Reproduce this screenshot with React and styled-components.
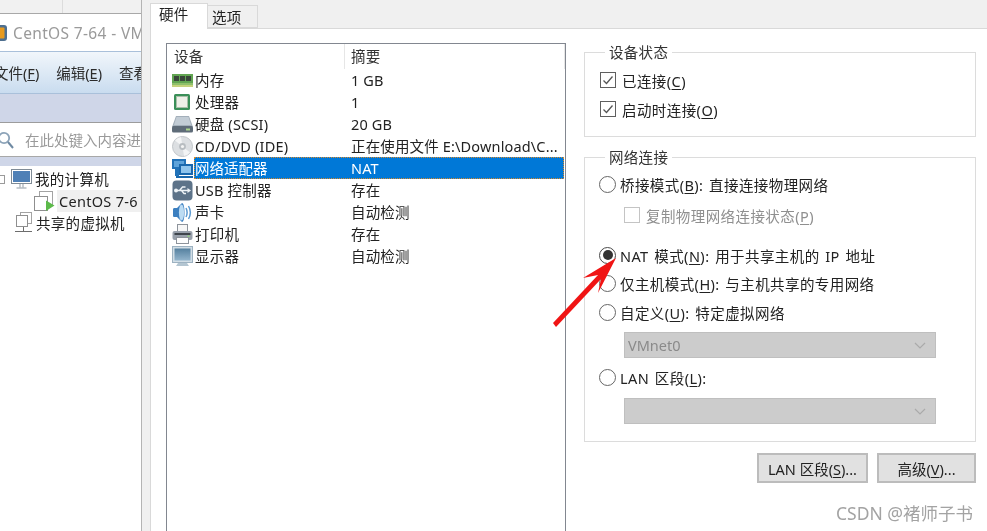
import React from 'react';
import styled, { createGlobalStyle } from 'styled-components';

const GlobalStyle = createGlobalStyle`
  html, body {
    margin: 0;
    padding: 0;
    background: #f0f0f0;
    overflow: hidden;
  }
  * { box-sizing: border-box; }
  svg { flex: none; }
`;

const Page = styled.div`
  position: relative;
  display: flex;
  width: 987px;
  height: 531px;
  overflow: hidden;
  font-family: "Noto Sans", "Noto Sans CJK SC", sans-serif;
  font-size: 14.5px;
  color: #222;
  filter: blur(0.35px);
`;

/* background window on the left */
const BackWindow = styled.div`
  width: 142px;
  flex: none;
  overflow: hidden;
  background: #fff;
  border-right: 1px solid #b4b4b4;
  white-space: nowrap;
`;

const TopStrip = styled.div`
  height: 14px;
  background: #f1f1f1;
  border-bottom: 1px solid #a8a8a8;
  display: flex;
  > div {
    width: 63px;
    border-right: 1px solid #dcdcdc;
  }
`;

const TitleBar = styled.div`
  height: 37px;
  display: flex;
  align-items: center;
  gap: 5px;
  margin-left: -10px;
  font-size: 15.5px;
  color: #9a9a9a;
  letter-spacing: 0.35px;
`;

const MenuBar = styled.div`
  height: 43px;
  display: flex;
  align-items: center;
  gap: 17px;
  color: #2b2b2b;
  background: linear-gradient(#f1f6fb, #c9dcef);
  border-top: 1px solid #a9c0da;
  border-bottom: 1px solid #a9c0da;
  > span:first-child { margin-left: -6px; }
`;

const ToolStrip = styled.div`
  height: 29px;
  background: #cfd6e8;
  border-bottom: 1px solid #9c9c9c;
`;

const SearchBar = styled.div`
  height: 34px;
  display: flex;
  align-items: center;
  gap: 11px;
  color: #9a9a9a;
  border-bottom: 1px solid #a8a8a8;
  svg { margin-left: -3px; }
`;

const SideStrip = styled.div`
  height: 9px;
  background: #cfd6e8;
`;

const Tree = styled.div`
  padding-top: 2px;
`;

const TreeRow = styled.div`
  height: 22px;
  display: flex;
  align-items: center;
  padding-left: ${p => p.$indent}px;
  gap: ${p => p.$gap}px;
`;

const TreeLabel = styled.span`
  padding: 0 2px;
  line-height: 22px;
  letter-spacing: 0.3px;
  background: ${p => (p.$active ? '#f0f0f0' : 'transparent')};
  flex: ${p => (p.$active ? '1' : 'none')};
`;

const Expander = styled.span`
  width: 6px;
  height: 9px;
  margin-left: -1px;
  margin-right: 5px;
  border: 1px solid #9a9a9a;
  border-left: none;
  flex: none;
`;

/* settings dialog */
const Dialog = styled.div`
  flex: 1;
  padding: 3px 0 0 8px;
  background: #f0f0f0;
  display: flex;
  flex-direction: column;
`;

const Tabs = styled.div`
  display: flex;
  align-items: flex-end;
  height: 25px;
  flex: none;
`;

const Tab = styled.div`
  height: ${p => (p.$active ? 26 : 23)}px;
  width: ${p => (p.$active ? 58 : 50)}px;
  margin-bottom: ${p => (p.$active ? -1 : 0)}px;
  padding-left: ${p => (p.$active ? 8 : 4)}px;
  line-height: ${p => (p.$active ? 21 : 22)}px;
  background: ${p => (p.$active ? '#fff' : '#f0f0f0')};
  border: 1px solid #d9d9d9;
  border-bottom: ${p => (p.$active ? 'none' : '1px solid #d9d9d9')};
  border-left: ${p => (p.$active ? '1px solid #d9d9d9' : 'none')};
  position: relative;
  letter-spacing: 0.3px;
`;

const TabPanel = styled.div`
  flex: 1;
  min-height: 0;
  display: flex;
  gap: 18px;
  padding: 14px 0 0 15px;
  background: #fff;
  border-top: 1px solid #d9d9d9;
  border-left: 1px solid #d9d9d9;
`;

const DeviceList = styled.div`
  width: 400px;
  height: 500px;
  flex: none;
  border: 1px solid #828790;
  border-bottom: none;
`;

const ListHeader = styled.div`
  display: flex;
  height: 25px;
  line-height: 25px;
  color: #333;
  letter-spacing: 0.3px;
`;

const HeadCell = styled.div`
  width: ${p => p.$w}px;
  padding-left: ${p => p.$pad}px;
  border-right: 1px solid #e6e6e6;
`;

const DeviceRow = styled.div`
  display: flex;
  height: 22px;
  align-items: center;
  padding-left: 4px;
  padding-right: 1px;
`;

const IconSlot = styled.span`
  width: 22px;
  height: 22px;
  flex: none;
  display: flex;
  align-items: center;
  justify-content: center;
`;

const RowBody = styled.div`
  flex: 1;
  display: flex;
  height: 22px;
  line-height: 22px;
  margin-left: 1px;
  color: ${p => (p.$selected ? '#fff' : '#222')};
  background: ${p => (p.$selected ? '#0078d7' : 'transparent')};
  outline: ${p => (p.$selected ? '1px dotted #d98a2b' : 'none')};
  outline-offset: -1px;
  white-space: nowrap;
`;

const DeviceName = styled.span`
  width: 157px;
  padding-left: 1px;
  flex: none;
  letter-spacing: ${p => (p.$selected ? 0 : 0.2)}px;
`;

const Summary = styled.span`
  flex: 1;
  letter-spacing: 0.15px;
`;

const SideColumn = styled.div`
  width: 392px;
  flex: none;
  display: flex;
  flex-direction: column;
`;

const Group = styled.fieldset`
  margin: 0;
  min-width: 0;
  padding: ${p => p.$pad};
  border: 1px solid #dcdcdc;
  & + & { margin-top: 11px; }
`;

const GroupTitle = styled.legend`
  margin-left: 5px;
  padding: 0 4px 0 4px;
  line-height: 19px;
  color: #333;
  letter-spacing: 0.3px;
`;

const Option = styled.div`
  display: flex;
  align-items: center;
  height: 20px;
  gap: 4px;
  margin-top: ${p => p.$top || 0}px;
  margin-left: ${p => p.$left || 0}px;
  color: ${p => (p.$disabled ? '#8f8f8f' : '#222')};
  white-space: nowrap;
  letter-spacing: 0.42px;
  word-spacing: 1.5px;
  u { text-underline-offset: 2px; }
`;

const Check = styled.span`
  width: 16px;
  height: 16px;
  flex: none;
  margin-right: 2px;
  border: 1px solid ${p => (p.$disabled ? '#c4c4c4' : '#5f5f5f')};
  background: #fff;
  display: flex;
  align-items: center;
  justify-content: center;
`;

const Radio = styled.span`
  width: 17px;
  height: 17px;
  flex: none;
  margin-left: -1px;
  border: 1.5px solid ${p => (p.$on ? '#4a4a4a' : '#666')};
  border-radius: 50%;
  background: #fff;
  display: flex;
  align-items: center;
  justify-content: center;
  &::after {
    content: '';
    width: 10px;
    height: 10px;
    border-radius: 50%;
    background: ${p => (p.$on ? '#333' : 'transparent')};
  }
`;

const FakeSelect = styled.div`
  width: 312px;
  height: 26px;
  margin-top: ${p => p.$top}px;
  margin-left: 24px;
  padding: 0 9px 0 3px;
  display: flex;
  align-items: center;
  justify-content: space-between;
  color: #8a8a8a;
  background: #cccccc;
  border: 1px solid #bfbfbf;
`;

const ButtonRow = styled.div`
  display: flex;
  justify-content: flex-end;
  gap: 9px;
  margin-top: 11px;
`;

const DialogButton = styled.button`
  width: ${p => p.$w}px;
  height: 30px;
  padding: 0;
  font: inherit;
  color: #222;
  background: #e1e1e1;
  border: 2px solid #bcbcbc;
  white-space: nowrap;
  u { text-underline-offset: 2px; }
`;

const Watermark = styled.div`
  position: absolute;
  right: 14px;
  bottom: 8px;
  font-size: 17.5px;
  line-height: 20px;
  color: #a3a3a3;
`;

const ArrowMark = styled.svg`
  position: absolute;
  left: 550px;
  top: 255px;
`;

/* little drawings */
const RamIcon = () => (
  <svg width="21" height="13" viewBox="0 0 21 13">
    <rect x="0" y="0" width="21" height="9" fill="#62a552" />
    <rect x="2" y="2" width="5" height="5" fill="#39463a" />
    <rect x="8" y="2" width="5" height="5" fill="#39463a" />
    <rect x="14" y="2" width="5" height="5" fill="#39463a" />
    <rect x="0" y="9" width="21" height="2" fill="#8fc06b" />
    <rect x="0" y="11" width="21" height="2" fill="#c5d27c" />
  </svg>
);

const CpuIcon = () => (
  <svg width="18" height="18" viewBox="0 0 18 18">
    <rect x="1" y="1" width="16" height="16" rx="1.5" fill="#3a8f58" />
    <rect x="3.5" y="3.5" width="11" height="11" fill="#eef0e8" stroke="#a8bfa8" />
  </svg>
);

const DiskIcon = () => (
  <svg width="21" height="17" viewBox="0 0 21 17">
    <path d="M4 0h13l4 11H0z" fill="#a3afba" />
    <path d="M4.5 1h12l2.5 8H2z" fill="#c2ccd5" />
    <rect x="0" y="10" width="21" height="6.5" rx="1.5" fill="#5e6b78" />
    <rect x="14" y="12.5" width="4" height="2" fill="#a9d48a" />
  </svg>
);

const DiscIcon = () => (
  <svg width="21" height="21" viewBox="0 0 21 21">
    <circle cx="10.5" cy="10.5" r="10" fill="#dcdfe2" stroke="#c1c5c9" />
    <path d="M10.5 10.5L3 4.5A10 10 0 0 1 9 1zM10.5 10.5L18 16.5A10 10 0 0 1 12 20z" fill="#f3f4f5" />
    <circle cx="10.5" cy="10.5" r="3.4" fill="#b8bdc1" />
    <circle cx="10.5" cy="10.5" r="1.6" fill="#f4f4f4" />
  </svg>
);

const NetIcon = () => (
  <svg width="21" height="21" viewBox="0 0 21 21">
    <rect x="0" y="1" width="14" height="10" fill="#2272b8" />
    <rect x="2" y="3" width="10" height="6" fill="#5ea3da" />
    <rect x="7" y="6" width="14" height="11" fill="#1a68ad" />
    <rect x="9" y="8" width="10" height="7" fill="#8fc4ec" />
    <rect x="4" y="18" width="17" height="2" fill="#1a68ad" />
    <rect x="3" y="11" width="4" height="7" fill="#2272b8" />
  </svg>
);

const UsbIcon = () => (
  <svg width="21" height="21" viewBox="0 0 21 21">
    <rect x="0.5" y="0.5" width="20" height="20" rx="4" fill="#5d7389" />
    <path d="M3.5 10.5h13M7.5 10.5l3-3.5h3M9.5 10.5l2.5 3h2" stroke="#eef3f7" strokeWidth="1.4" fill="none" />
    <circle cx="4" cy="10.5" r="2" fill="#eef3f7" />
    <path d="M15.5 8l3.5 2.5-3.5 2.5z" fill="#eef3f7" />
  </svg>
);

const SpeakerIcon = () => (
  <svg width="20" height="21" viewBox="0 0 20 21">
    <path d="M1 7.5c0-1 .6-1.5 1.5-1.5H5L10 1c1.5 0 2.5 4 2.5 9.5S11.500 20 10 20L5 15H2.500C1.600 15 1 14.500 1 13.500z" fill="#3c7fc0" />
    <ellipse cx="9.500" cy="10.500" rx="2.600" ry="8" fill="#bcdcf3" />
    <path d="M14 6c1.500 3 1.500 6 0 9M16.500 4c2.300 4 2.300 9 0 13" stroke="#5c9bd2" strokeWidth="1.500" fill="none" />
  </svg>
);

const PrinterIcon = () => (
  <svg width="21" height="21" viewBox="0 0 21 21">
    <rect x="5.500" y="0.500" width="10" height="8" fill="#f7f7f7" stroke="#8d939b" />
    <rect x="0.500" y="7" width="20" height="9" rx="2" fill="#98a0ab" />
    <rect x="2.500" y="9" width="16" height="2" fill="#3f454c" />
    <rect x="15.500" y="11.500" width="2" height="1.500" fill="#8fcf7a" />
    <rect x="4.500" y="13.500" width="12" height="6" fill="#fdfdfd" stroke="#8d939b" />
  </svg>
);

const MonitorIcon = () => (
  <svg width="21" height="21" viewBox="0 0 21 21">
    <defs>
      <linearGradient id="screenFill" x1="0" y1="0" x2="0" y2="1">
        <stop offset="0" stopColor="#55809f" />
        <stop offset="1" stopColor="#93b5cd" />
      </linearGradient>
    </defs>
    <rect x="0.500" y="0.500" width="20" height="16" fill="#d2dee6" stroke="#9db2c1" />
    <rect x="2.500" y="2.500" width="16" height="12" fill="url(#screenFill)" />
    <path d="M6 17h9l2 3H4z" fill="#b3c5d1" />
  </svg>
);

const HostIcon = () => (
  <svg width="21" height="21" viewBox="0 0 21 21">
    <rect x="0.500" y="0.500" width="20" height="14" fill="#fff" stroke="#7f8b96" />
    <rect x="2" y="2" width="17" height="11" fill="#4f80b6" />
    <path d="M9 15v3.500M12 15v3.500M5.500 19h10" stroke="#8f9aa5" fill="none" />
  </svg>
);

const VmIcon = () => (
  <svg width="21" height="22" viewBox="0 0 21 22">
    <rect x="5.500" y="1.500" width="13" height="13" fill="#fff" stroke="#a3a3a3" />
    <rect x="0.500" y="6.500" width="13" height="14" fill="#fff" stroke="#8f8f8f" />
    <path d="M12 10.500l8.500 5-8.500 5.500z" fill="#5cba4a" />
  </svg>
);

const SharedIcon = () => (
  <svg width="21" height="22" viewBox="0 0 21 22">
    <rect x="7.500" y="0.500" width="11" height="11" fill="#fff" stroke="#a3a3a3" />
    <rect x="3.500" y="3.500" width="11" height="11" fill="#fff" stroke="#8f8f8f" />
    <path d="M10.500 15v4M2 19.500h17" stroke="#6d6d6d" fill="none" />
  </svg>
);

const SearchGlass = () => (
  <svg width="17" height="18" viewBox="0 0 17 18">
    <circle cx="7" cy="7" r="5.200" fill="none" stroke="#8ca3b8" strokeWidth="1.800" />
    <path d="M11 11l5 6" stroke="#6f8aa3" strokeWidth="2" />
  </svg>
);

const AppLogo = () => (
  <svg width="18" height="18" viewBox="0 0 18 18">
    <rect x="1" y="1" width="16" height="16" rx="3" fill="#4e6f8f" />
    <rect x="3.500" y="3.500" width="11" height="11" rx="1" fill="#e89a1d" />
  </svg>
);

const Tick = () => (
  <svg width="12" height="12" viewBox="0 0 12 12">
    <path d="M1.500 6.500l3 3 6-7" fill="none" stroke="#555" strokeWidth="1.300" />
  </svg>
);

const Chevron = () => (
  <svg width="12" height="7" viewBox="0 0 12 7">
    <path d="M1 1l5 5 5-5" fill="none" stroke="#aaa" strokeWidth="1.200" />
  </svg>
);

const devices = [
  { icon: <RamIcon />, name: '内存', summary: '1 GB' },
  { icon: <CpuIcon />, name: '处理器', summary: '1' },
  { icon: <DiskIcon />, name: '硬盘 (SCSI)', summary: '20 GB' },
  { icon: <DiscIcon />, name: 'CD/DVD (IDE)', summary: '正在使用文件 E:\\Download\\C...' },
  { icon: <NetIcon />, name: '网络适配器', summary: 'NAT', selected: true },
  { icon: <UsbIcon />, name: 'USB 控制器', summary: '存在' },
  { icon: <SpeakerIcon />, name: '声卡', summary: '自动检测' },
  { icon: <PrinterIcon />, name: '打印机', summary: '存在' },
  { icon: <MonitorIcon />, name: '显示器', summary: '自动检测' },
];

export default function App() {
  return (
    <Page>
      <GlobalStyle />
      <BackWindow>
        <TopStrip><div /></TopStrip>
        <TitleBar><AppLogo />CentOS 7-64 - VM</TitleBar>
        <MenuBar>
          <span>文件(<u>F</u>)</span>
          <span>编辑(<u>E</u>)</span>
          <span>查看</span>
        </MenuBar>
        <ToolStrip />
        <SearchBar><SearchGlass />在此处键入内容进</SearchBar>
        <SideStrip />
        <Tree>
          <TreeRow $indent={0} $gap={1}>
            <Expander />
            <HostIcon />
            <TreeLabel>我的计算机</TreeLabel>
          </TreeRow>
          <TreeRow $indent={34} $gap={2}>
            <VmIcon />
            <TreeLabel $active>CentOS 7-6</TreeLabel>
          </TreeRow>
          <TreeRow $indent={13} $gap={0}>
            <SharedIcon />
            <TreeLabel>共享的虚拟机</TreeLabel>
          </TreeRow>
        </Tree>
      </BackWindow>

      <Dialog>
        <Tabs>
          <Tab $active>硬件</Tab>
          <Tab>选项</Tab>
        </Tabs>
        <TabPanel>
          <DeviceList>
            <ListHeader>
              <HeadCell $w={178} $pad={7}>设备</HeadCell>
              <HeadCell $w={220} $pad={6}>摘要</HeadCell>
            </ListHeader>
            {devices.map(d => (
              <DeviceRow key={d.name}>
                <IconSlot>{d.icon}</IconSlot>
                <RowBody $selected={d.selected}>
                  <DeviceName $selected={d.selected}>{d.name}</DeviceName>
                  <Summary>{d.summary}</Summary>
                </RowBody>
              </DeviceRow>
            ))}
          </DeviceList>

          <SideColumn>
            <Group $pad="0 15px 17px">
              <GroupTitle>设备状态</GroupTitle>
              <Option $top={8}><Check><Tick /></Check><span>已连接(<u>C</u>)</span></Option>
              <Option $top={9}><Check><Tick /></Check><span>启动时连接(<u>O</u>)</span></Option>
            </Group>
            <Group $pad="0 15px 17px">
              <GroupTitle>网络连接</GroupTitle>
              <Option $top={7}><Radio /><span>桥接模式(<u>B</u>): 直接连接物理网络</span></Option>
              <Option $top={11} $left={24} $disabled><Check $disabled /><span>复制物理网络连接状态(<u>P</u>)</span></Option>
              <Option $top={20}><Radio $on /><span>NAT 模式(<u>N</u>): 用于共享主机的 IP 地址</span></Option>
              <Option $top={8}><Radio /><span>仅主机模式(<u>H</u>): 与主机共享的专用网络</span></Option>
              <Option $top={9}><Radio /><span>自定义(<u>U</u>): 特定虚拟网络</span></Option>
              <FakeSelect $top={10}>VMnet0<Chevron /></FakeSelect>
              <Option $top={9}><Radio /><span>LAN 区段(<u>L</u>):</span></Option>
              <FakeSelect $top={11}><span /><Chevron /></FakeSelect>
            </Group>
            <ButtonRow>
              <DialogButton $w={111}>LAN 区段(<u>S</u>)...</DialogButton>
              <DialogButton $w={99}>高级(<u>V</u>)...</DialogButton>
            </ButtonRow>
          </SideColumn>
        </TabPanel>
      </Dialog>

      <ArrowMark width="70" height="75" viewBox="550 255 70 75">
        <path d="M616 258L583 278 598 275 553 323 556 327 601 279 598 293Z" fill="#f01414" />
      </ArrowMark>
      <Watermark>CSDN @褚师子书</Watermark>
    </Page>
  );
}
